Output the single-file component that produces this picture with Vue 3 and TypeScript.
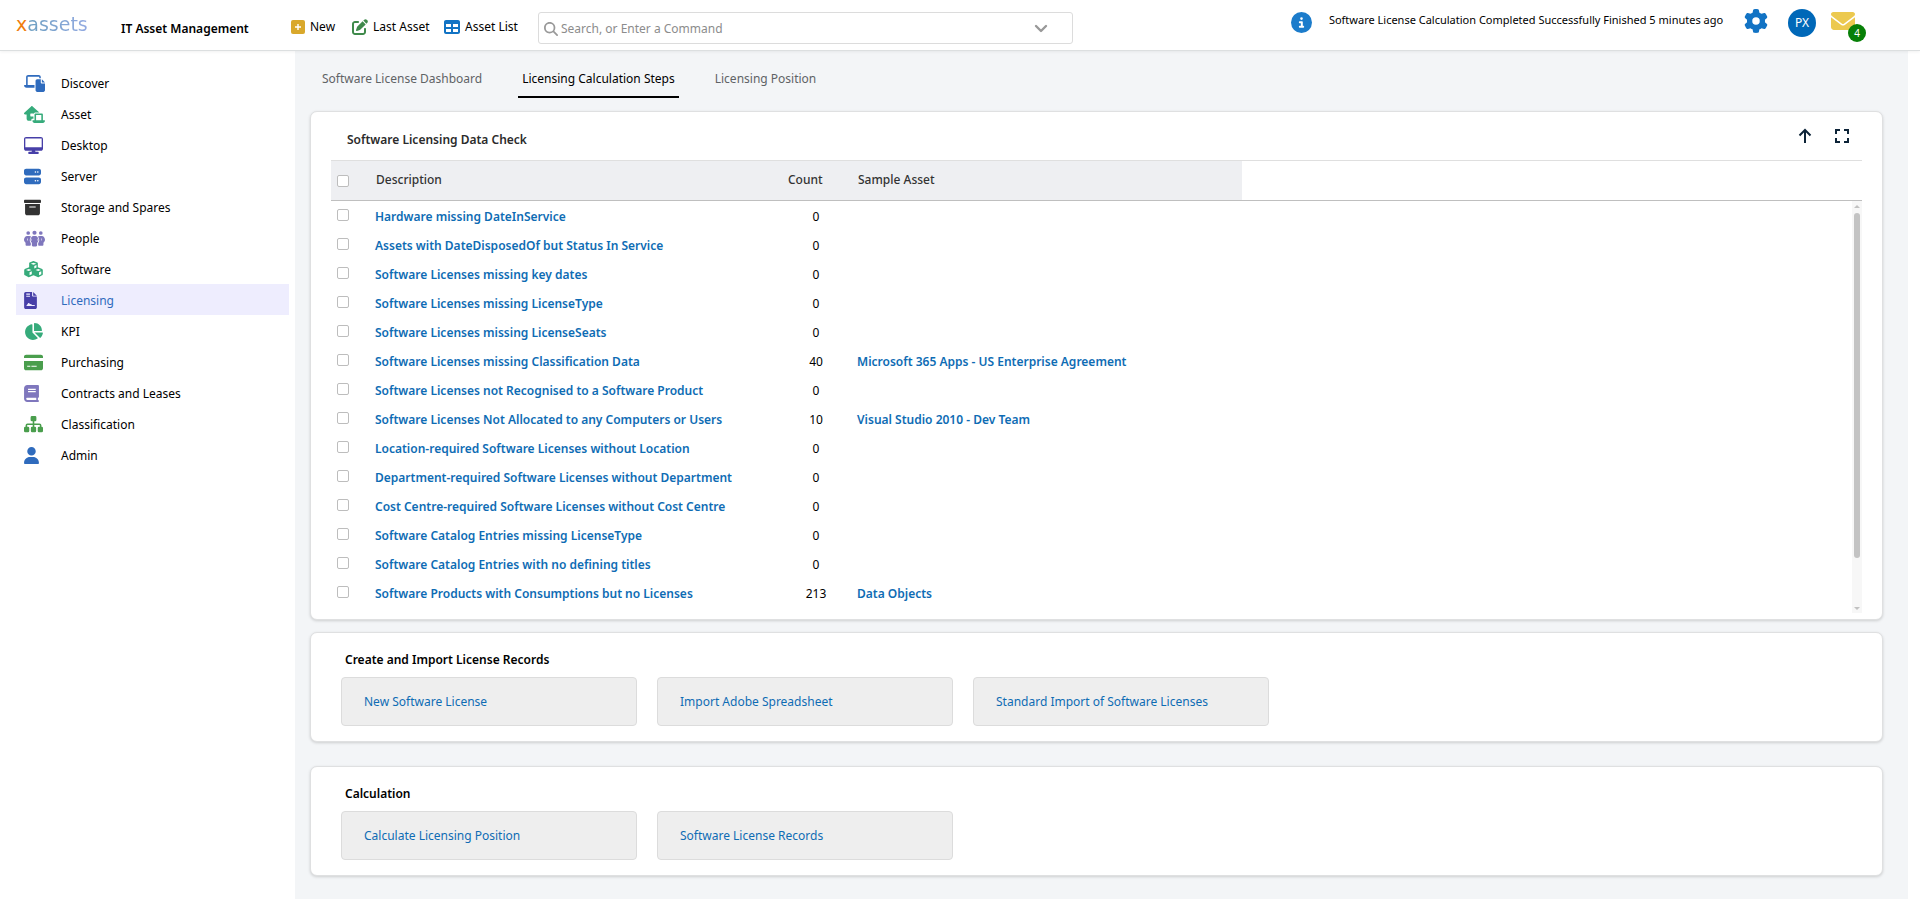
<script setup lang="ts">
import { ref } from 'vue'

interface Icon {
  box: string
  width: number
  height: number
  color: string
  d: string
}

interface NavItem {
  label: string
  icon: Icon
}

interface CheckRow {
  description: string
  count: number
  sample?: string
}

interface ActionGroup {
  title: string
  actions: string[]
}

const navItems: NavItem[] = [
  {
    label: 'Discover',
    icon: {
      box: '0 0 640 512', width: 21, height: 17, color: '#2f6bbd',
      d: 'M128 0C93 0 64 29 64 64V304H19C8 304 0 310 0 320C0 356 35 384 77 384H320V304H112V48H464V96H512V64C512 29 483 0 448 0zM512 128H400C374 128 352 150 352 176V464C352 490 374 512 400 512H592C618 512 640 490 640 464V256H544C526 256 512 242 512 224zM544 128V224H640z',
    },
  },
  {
    label: 'Asset',
    icon: {
      box: '0 0 640 512', width: 21, height: 17, color: '#36ab7b',
      d: 'M218 9C230 -3 250 -3 262 9L469 192H352C326 192 304 210 296 234C291 227 283 224 272 224H208C199 224 192 231 192 240V304C192 313 199 320 208 320H272C280 320 286 316 288 308V384H256C238 384 224 398 224 416V448H144C109 448 80 419 80 384V256H32C19 256 7 248 2 235C-3 223 1 209 10 200zM352 224H544C562 224 576 238 576 256V432H624C633 432 640 439 640 448C640 483 611 512 576 512H320C285 512 256 483 256 448C256 439 263 432 272 432H320V256C320 238 334 224 352 224zM368 272V432H528V272z',
    },
  },
  {
    label: 'Desktop',
    icon: {
      box: '0 0 576 512', width: 19, height: 17, color: '#473fa8',
      d: 'M64 0C28.7 0 0 28.7 0 64V352c0 35.3 28.7 64 64 64H240l-10.7 32H160c-17.7 0-32 14.3-32 32s14.3 32 32 32H416c17.7 0 32-14.3 32-32s-14.3-32-32-32H346.7L336 416H512c35.3 0 64-28.7 64-64V64c0-35.3-28.7-64-64-64H64zM536 40V310H40V40H536z',
    },
  },
  {
    label: 'Server',
    icon: {
      box: '0 0 512 512', width: 17, height: 17, color: '#2f6bbd',
      d: 'M64 20C28.7 20 0 48.7 0 84v76c0 35.3 28.7 64 64 64H448c35.3 0 64-28.7 64-64V84c0-35.3-28.7-64-64-64H64zm280 78a24 24 0 1 1 0 48 24 24 0 1 1 0-48zm48 24a24 24 0 1 1 48 0 24 24 0 1 1 -48 0zM64 284c-35.3 0-64 28.7-64 64v76c0 35.3 28.7 64 64 64H448c35.3 0 64-28.7 64-64V348c0-35.3-28.7-64-64-64H64zm280 78a24 24 0 1 1 0 48 24 24 0 1 1 0-48zm48 24a24 24 0 1 1 48 0 24 24 0 1 1 -48 0z',
    },
  },
  {
    label: 'Storage and Spares',
    icon: {
      box: '0 0 512 512', width: 17, height: 17, color: '#333333',
      d: 'M32 20H480c17.7 0 32 14.3 32 32V88c0 17.7-14.3 32-32 32H32C14.3 120 0 105.7 0 88V52C0 34.300 14.300 20 32 20zM32 152H480V428c0 35.300-28.700 64-64 64H96c-35.300 0-64-28.700-64-64V152zM160 224V256H352V224z',
    },
  },
  {
    label: 'People',
    icon: {
      box: '0 0 640 512', width: 21, height: 17, color: '#7f77bd',
      d: 'M72 88a56 56 0 1 1 112 0a56 56 0 1 1 -112 0zM256 80a64 64 0 1 1 128 0a64 64 0 1 1 -128 0zM456 88a56 56 0 1 1 112 0a56 56 0 1 1 -112 0zM96 176H160C182 176 202 183 218 196C190 228 176 266 176 304C176 346 190 380 208 402V448C208 466 194 480 176 480H80C62 480 48 466 48 448V382C18 358 0 330 0 296C0 232 40 176 96 176zM480 176H544C600 176 640 232 640 296C640 330 622 358 592 382V448C592 466 578 480 560 480H464C446 480 432 466 432 448V402C450 380 464 346 464 304C464 266 450 228 422 196C438 183 458 176 480 176zM290 176H350C404 176 440 230 440 296C440 340 424 366 400 386V464C400 482 386 496 368 496H272C254 496 240 482 240 464V386C216 366 200 340 200 296C200 230 236 176 290 176zM240 250C222 282 222 312 240 340zM400 250V340C418 312 418 282 400 250zM110 240C86 268 86 306 110 334zM530 240V334C554 306 554 268 530 240z',
    },
  },
  {
    label: 'Software',
    icon: {
      box: '0 0 576 512', width: 19, height: 17, color: '#36ab7b',
      d: 'M290 0L405 42Q420 48 420 66V190L535 232Q566 244 570 272V400Q570 424 548 434L450 482Q430 492 412 484L288 432L164 484Q146 492 126 482L28 434Q6 424 6 400V272Q10 244 41 232L156 190V66Q156 48 171 42L280 2zM288 48L204 80L288 112L372 80zM312 150V222L378 192V122zM144 240L62 270L144 302L226 270zM168 342V430L236 400V312zM432 240L350 270L432 302L514 270zM456 342V430L524 400V312z',
    },
  },
  {
    label: 'Licensing',
    icon: {
      box: '0 0 384 512', width: 13, height: 17, color: '#473fa8',
      d: 'M48 0H240V104C240 122 254 136 272 136H384V464C384 490 362 512 336 512H48C22 512 0 490 0 464V48C0 22 22 0 48 0zM272 0L384 112H272zM64 48V80H176V48zM64 112V144H176V112zM64 424L120 340C130 324 146 324 156 340L180 372C190 358 204 358 214 370L240 392H320V424z',
    },
  },
  {
    label: 'KPI',
    icon: {
      box: '0 0 576 512', width: 19, height: 17, color: '#36ab7b',
      d: 'M304 240V16.6c0-9 7-16.6 16-16.6C443.7 0 544 100.3 544 224c0 9-7.6 16-16.6 16H304zM32 272C32 150.7 122.1 50.3 239 34.3c9.2-1.3 17 6.1 17 15.4V288L412.5 444.5c6.7 6.7 6.2 17.7-1.5 23.1C371.8 495.6 323.8 512 272 512C139.5 512 32 404.6 32 272zm526.4 16c9.3 0 16.6 7.8 15.4 17c-7.7 55.9-34.6 105.6-73.9 142.3c-6 5.6-15.4 5.2-21.2-.7L320 288H558.4z',
    },
  },
  {
    label: 'Purchasing',
    icon: {
      box: '0 0 576 512', width: 19, height: 17, color: '#4a9e4d',
      d: 'M64 20C28.7 20 0 48.7 0 84v36H576V84c0-35.3-28.7-64-64-64H64zM576 212H0V428c0 35.3 28.7 64 64 64H512c35.3 0 64-28.7 64-64V212zM96 352h96v32H96zM224 352h160v32H224z',
    },
  },
  {
    label: 'Contracts and Leases',
    icon: {
      box: '0 0 448 512', width: 15, height: 17, color: '#7f77bd',
      d: 'M96 0C43 0 0 43 0 96V416c0 53 43 96 96 96H384h32c17.7 0 32-14.3 32-32s-14.3-32-32-32V384c17.7 0 32-14.3 32-32V32c0-17.7-14.3-32-32-32H96zm0 384H368v64H96c-17.7 0-32-14.3-32-32s14.3-32 32-32zM120 112V148H352V112zM120 184V220H352V184z',
    },
  },
  {
    label: 'Classification',
    icon: {
      box: '0 0 576 512', width: 19, height: 17, color: '#4a9e4d',
      d: 'M240 0H336Q376 0 376 40V120Q376 160 336 160H312V224H470Q528 224 528 282V324H536Q576 324 576 364V452Q576 492 536 492H456Q416 492 416 452V364Q416 324 456 324H480V282Q480 272 470 272H312V324H328Q368 324 368 364V452Q368 492 328 492H248Q208 492 208 452V364Q208 324 248 324H264V272H106Q96 272 96 282V324H120Q160 324 160 364V452Q160 492 120 492H40Q0 492 0 452V364Q0 324 40 324H48V282Q48 224 106 224H264V160H240Q200 160 200 120V40Q200 0 240 0z',
    },
  },
  {
    label: 'Admin',
    icon: {
      box: '0 0 448 512', width: 15, height: 17, color: '#2f6bbd',
      d: 'M224 256A128 128 0 1 0 224 0a128 128 0 1 0 0 256zm-45.7 48C79.8 304 0 383.8 0 482.3C0 498.7 13.3 512 29.7 512H418.3c16.4 0 29.7-13.3 29.7-29.7C448 383.8 368.2 304 269.7 304H178.3z',
    },
  },
]

const tabs = ['Software License Dashboard', 'Licensing Calculation Steps', 'Licensing Position']

const rows: CheckRow[] = [
  { description: 'Hardware missing DateInService', count: 0 },
  { description: 'Assets with DateDisposedOf but Status In Service', count: 0 },
  { description: 'Software Licenses missing key dates', count: 0 },
  { description: 'Software Licenses missing LicenseType', count: 0 },
  { description: 'Software Licenses missing LicenseSeats', count: 0 },
  { description: 'Software Licenses missing Classification Data', count: 40, sample: 'Microsoft 365 Apps - US Enterprise Agreement' },
  { description: 'Software Licenses not Recognised to a Software Product', count: 0 },
  { description: 'Software Licenses Not Allocated to any Computers or Users', count: 10, sample: 'Visual Studio 2010 - Dev Team' },
  { description: 'Location-required Software Licenses without Location', count: 0 },
  { description: 'Department-required Software Licenses without Department', count: 0 },
  { description: 'Cost Centre-required Software Licenses without Cost Centre', count: 0 },
  { description: 'Software Catalog Entries missing LicenseType', count: 0 },
  { description: 'Software Catalog Entries with no defining titles', count: 0 },
  { description: 'Software Products with Consumptions but no Licenses', count: 213, sample: 'Data Objects' },
]

const groups: ActionGroup[] = [
  {
    title: 'Create and Import License Records',
    actions: ['New Software License', 'Import Adobe Spreadsheet', 'Standard Import of Software Licenses'],
  },
  {
    title: 'Calculation',
    actions: ['Calculate Licensing Position', 'Software License Records'],
  },
]

const activeNav = ref('Licensing')
const activeTab = ref('Licensing Calculation Steps')
const query = ref('')
const selected = ref<string[]>([])

function toggleAll(event: Event) {
  const checked = (event.target as HTMLInputElement).checked
  selected.value = checked ? rows.map((row) => row.description) : []
}
</script>

<template>
  <div class="page">
    <header class="topbar">
      <a class="logo" href="#"><span class="logo-x">x</span><span class="logo-rest">assets</span></a>
      <h1 class="product">IT Asset Management</h1>

      <nav class="quick" aria-label="Quick actions">
        <a class="quick-new" href="#">
          <svg width="14" height="14" viewBox="0 0 14 14">
            <rect width="14" height="14" rx="2" fill="#d9a82b" />
            <path d="M7 4v6M4 7h6" stroke="#fff" stroke-width="1.400" />
          </svg>
          New
        </a>
        <a class="quick-last" href="#">
          <svg width="16" height="16" viewBox="0 0 512 512" fill="#3f8a4b">
            <path d="M471.6 21.7c-21.9-21.9-57.3-21.9-79.2 0L362.3 51.7l97.9 97.9 30.1-30.1c21.9-21.9 21.9-57.3 0-79.2L471.6 21.7zm-299.2 220c-6.1 6.1-10.8 13.6-13.5 21.9l-29.6 88.8c-2.9 8.6-.6 18.1 5.8 24.6s15.9 8.7 24.6 5.8l88.8-29.6c8.2-2.7 15.7-7.4 21.9-13.5L437.7 172.3 339.7 74.3 172.4 241.7zM96 64C43 64 0 107 0 160V416c0 53 43 96 96 96H352c53 0 96-43 96-96V320c0-17.7-14.3-32-32-32s-32 14.3-32 32v96c0 17.7-14.3 32-32 32H96c-17.7 0-32-14.3-32-32V160c0-17.7 14.3-32 32-32h96c17.7 0 32-14.3 32-32s-14.3-32-32-32H96z" />
          </svg>
          Last Asset
        </a>
        <a class="quick-list" href="#">
          <svg width="16" height="16" viewBox="0 0 512 512" fill="#1273c4">
            <path fill-rule="evenodd" d="M64 256V160H224v96H64zm0 64H224v96H64V320zm224 96V320H448v96H288zM448 256H288V160H448v96zM64 32C28.7 32 0 60.7 0 96V416c0 35.3 28.7 64 64 64H448c35.3 0 64-28.7 64-64V96c0-35.3-28.7-64-64-64H64z" />
          </svg>
          Asset List
        </a>
      </nav>

      <form class="search" role="search" @submit.prevent>
        <svg width="14" height="14" viewBox="0 0 512 512" fill="#999">
          <path d="M416 208c0 45.9-14.9 88.3-40 122.7L502.6 457.4c12.5 12.5 12.5 32.8 0 45.3s-32.8 12.5-45.3 0L330.7 376c-34.4 25.2-76.8 40-122.7 40C93.1 416 0 322.9 0 208S93.1 0 208 0S416 93.1 416 208zM208 352a144 144 0 1 0 0-288 144 144 0 1 0 0 288z" />
        </svg>
        <input v-model="query" type="text" aria-label="Search" placeholder="Search, or Enter a Command" />
        <button type="button" aria-label="Show commands">
          <svg width="14" height="10" viewBox="0 0 14 10">
            <path d="M2 2l5 5 5-5" fill="none" stroke="#999" stroke-width="2.400" stroke-linecap="round" stroke-linejoin="round" />
          </svg>
        </button>
      </form>

      <div class="status">
        <svg width="21" height="21" viewBox="0 0 512 512" fill="#1c7ccb">
          <path d="M256 512A256 256 0 1 0 256 0a256 256 0 1 0 0 512zM216 336h24V272H216c-13.3 0-24-10.7-24-24s10.7-24 24-24h48c13.3 0 24 10.7 24 24v88h8c13.3 0 24 10.7 24 24s-10.7 24-24 24H216c-13.3 0-24-10.7-24-24s10.7-24 24-24zm40-208a32 32 0 1 1 0 64 32 32 0 1 1 0-64z" />
        </svg>
        <span class="status-text">Software License Calculation Completed Successfully Finished 5 minutes ago</span>
        <button class="gear" type="button" aria-label="Settings">
          <svg width="24" height="24" viewBox="0 0 512 512" fill="#1273c4">
            <path d="M495.9 166.6c3.2 8.700 .5 18.400-6.400 24.600l-43.300 39.400c1.100 8.300 1.700 16.800 1.700 25.400s-.6 17.100-1.700 25.400l43.300 39.400c6.900 6.200 9.600 15.900 6.400 24.600c-4.400 11.900-9.700 23.300-15.800 34.300l-4.700 8.100c-6.600 11-14 21.400-22.100 31.200c-5.900 7.200-15.700 9.600-24.500 6.800l-55.700-17.700c-13.400 10.300-28.200 18.900-44 25.400l-12.500 57.100c-2 9.100-9 16.300-18.200 17.800c-13.800 2.300-28 3.500-42.500 3.500s-28.700-1.200-42.500-3.500c-9.200-1.500-16.200-8.700-18.200-17.800l-12.500-57.100c-15.800-6.500-30.600-15.100-44-25.400L83.100 425.900c-8.800 2.800-18.600 .3-24.500-6.800c-8.100-9.800-15.500-20.200-22.100-31.200l-4.700-8.100c-6.100-11-11.400-22.400-15.800-34.300c-3.200-8.700-.5-18.400 6.400-24.600l43.300-39.400C64.600 273.100 64 264.600 64 256s.6-17.100 1.700-25.400L22.400 191.200c-6.900-6.200-9.600-15.900-6.400-24.600c4.400-11.900 9.700-23.300 15.800-34.300l4.700-8.100c6.600-11 14-21.400 22.100-31.200c5.900-7.200 15.700-9.600 24.500-6.800l55.700 17.700c13.400-10.300 28.200-18.900 44-25.400l12.500-57.100c2-9.100 9-16.300 18.200-17.800C227.300 1.200 241.500 0 256 0s28.700 1.200 42.500 3.500c9.200 1.500 16.200 8.700 18.200 17.800l12.500 57.100c15.800 6.500 30.600 15.100 44 25.400l55.700-17.700c8.800-2.800 18.600-.3 24.500 6.800c8.100 9.800 15.500 20.200 22.100 31.200l4.700 8.100c6.100 11 11.400 22.400 15.800 34.300zM256 336a80 80 0 1 0 0-160 80 80 0 1 0 0 160z" />
          </svg>
        </button>
        <button class="avatar" type="button">PX</button>
        <button class="mail" type="button" aria-label="Messages, 4 unread">
          <svg width="24" height="18" viewBox="0 64 512 384" preserveAspectRatio="none" fill="#ecc94f">
            <path d="M48 64C21.5 64 0 85.5 0 112c0 15.1 7.1 29.3 19.2 38.4L236.8 313.6c11.4 8.5 27 8.5 38.4 0L492.8 150.4c12.1-9.1 19.2-23.3 19.2-38.4c0-26.5-21.5-48-48-48H48zM0 176V384c0 35.3 28.7 64 64 64H448c35.3 0 64-28.7 64-64V176L294.4 339.2c-22.8 17.1-54 17.1-76.8 0L0 176z" />
          </svg>
          <span class="badge">4</span>
        </button>
      </div>
    </header>

    <div class="body">
      <nav class="sidebar" aria-label="Sections">
        <a
          v-for="item in navItems"
          :key="item.label"
          href="#"
          class="nav-item"
          :class="{ active: item.label === activeNav }"
          @click.prevent="activeNav = item.label"
        >
          <span class="nav-icon">
            <svg :width="item.icon.width" :height="item.icon.height" :viewBox="item.icon.box" :fill="item.icon.color">
              <path fill-rule="evenodd" :d="item.icon.d" />
            </svg>
          </span>
          <span>{{ item.label }}</span>
        </a>
      </nav>

      <main class="content">
        <nav class="tabs" aria-label="Views">
          <a
            v-for="tab in tabs"
            :key="tab"
            href="#"
            class="tab"
            :class="{ active: tab === activeTab }"
            @click.prevent="activeTab = tab"
          >{{ tab }}</a>
        </nav>

        <section class="card check-card">
          <div class="card-head">
            <h2>Software Licensing Data Check</h2>
            <div class="tools">
              <button type="button" aria-label="Move up">
                <svg width="14" height="16" viewBox="0 0 14 16">
                  <path d="M7 15V2M1.500 7.500L7 2l5.500 5.500" fill="none" stroke="#0d2438" stroke-width="2" />
                </svg>
              </button>
              <button type="button" aria-label="Full screen">
                <svg width="16" height="16" viewBox="0 0 16 16">
                  <path d="M2 6V2h4M10 2h4v4M14 10v4h-4M6 14H2v-4" fill="none" stroke="#0d2438" stroke-width="2" />
                </svg>
              </button>
            </div>
          </div>

          <div class="grid">
            <table>
              <colgroup>
                <col class="col-check" />
                <col class="col-desc" />
                <col class="col-count" />
                <col class="col-sample" />
                <col />
              </colgroup>
              <thead>
                <tr>
                  <th><input type="checkbox" aria-label="Select all" @change="toggleAll" /></th>
                  <th>Description</th>
                  <th class="count-head">Count</th>
                  <th>Sample Asset</th>
                  <td class="filler"></td>
                </tr>
              </thead>
              <tbody>
                <tr v-for="row in rows" :key="row.description">
                  <td><input v-model="selected" type="checkbox" :value="row.description" :aria-label="row.description" /></td>
                  <td><a href="#">{{ row.description }}</a></td>
                  <td class="count">{{ row.count }}</td>
                  <td><a v-if="row.sample" href="#">{{ row.sample }}</a></td>
                  <td></td>
                </tr>
              </tbody>
            </table>
            <div class="scrollbar" aria-hidden="true">
              <svg width="6" height="12" viewBox="0 0 6 12"><path d="M0 7l3-3 3 3z" fill="#c1c1c1" /></svg>
              <div class="track"><div class="thumb"></div></div>
              <svg width="6" height="12" viewBox="0 0 6 12"><path d="M0 6l3 3 3-3z" fill="#c1c1c1" /></svg>
            </div>
          </div>
        </section>

        <section v-for="group in groups" :key="group.title" class="card group">
          <h2>{{ group.title }}</h2>
          <div class="tiles">
            <a v-for="action in group.actions" :key="action" href="#" class="tile">{{ action }}</a>
          </div>
        </section>
      </main>
    </div>
  </div>
</template>

<style>
body {
  margin: 0;
  background: #fff;
}
</style>

<style scoped>
.page {
  box-sizing: border-box;
  min-height: 100vh;
  display: flex;
  flex-direction: column;
  padding-bottom: 13px;
  background: #fff;
  color: #000;
  font-family: "Segoe UI", "Noto Sans", "Open Sans", sans-serif;
  font-size: 12px;
  line-height: 18px;
}

.page * {
  box-sizing: border-box;
}

a {
  color: inherit;
  text-decoration: none;
}

button {
  padding: 0;
  border: 0;
  background: none;
  color: inherit;
  font: inherit;
  cursor: pointer;
}

svg {
  display: block;
  flex: none;
}

h1,
h2 {
  margin: 0;
  font-size: 12px;
  font-weight: 600;
}

.topbar {
  position: relative;
  display: flex;
  align-items: flex-start;
  height: 51px;
  padding-left: 16px;
  padding-right: 54px;
  border-bottom: 1px solid #dcdfe0;
  box-shadow: 0 1px 3px rgba(0, 0, 0, 0.06);
}

.logo {
  width: 105px;
  padding-top: 12px;
  font-family: "DejaVu Sans", Verdana, sans-serif;
  font-size: 19px;
  line-height: 24px;
}

.logo-x {
  color: #ef7d0c;
}

.logo-rest {
  background: linear-gradient(90deg, #6d9fc0, #93aae2);
  background-clip: text;
  color: transparent;
}

.product {
  width: 170px;
  padding-top: 20px;
  white-space: nowrap;
}

.quick {
  display: flex;
  padding-top: 18px;
  white-space: nowrap;
}

.quick a {
  display: flex;
  align-items: center;
  gap: 5px;
}

.quick-new {
  width: 61px;
}

.quick-last {
  width: 92px;
}

.quick-list {
  width: 94px;
}

.search {
  display: flex;
  align-items: center;
  flex: 0 1 535px;
  height: 32px;
  margin-top: 12px;
  padding: 2px 24px 0 5px;
  border: 1px solid #dcdcdc;
  border-radius: 3px;
}

.search input {
  flex: 1;
  min-width: 0;
  padding: 0 3px;
  border: 0;
  outline: 0;
  background: none;
  color: #333;
  font: inherit;
}

.search input::placeholder {
  color: #8c8c8c;
  opacity: 1;
}

.status {
  display: flex;
  align-items: flex-start;
  margin-left: auto;
  padding-top: 9px;
  white-space: nowrap;
}

.status > svg {
  margin-top: 3px;
}

.status-text {
  min-width: 404px;
  margin: 2px 16px 0 12px;
  font-size: 11px;
  text-align: center;
}

.avatar {
  width: 28px;
  height: 28px;
  margin: 0 15px 0 20px;
  border-radius: 50%;
  background: #0068b8;
  color: #fff;
}

.mail {
  position: relative;
  width: 35px;
  height: 33px;
  padding-top: 3px;
  display: flex;
  align-items: flex-start;
}

.badge {
  position: absolute;
  right: 0;
  bottom: 0;
  width: 18px;
  height: 18px;
  border-radius: 50%;
  background: #078007;
  color: #fff;
  font-size: 10px;
  text-align: center;
}

.body {
  display: flex;
  flex: 1;
  padding-right: 12px;
}

.sidebar {
  flex: none;
  width: 295px;
  padding: 16px 6px 0 16px;
}

.nav-item {
  display: flex;
  align-items: center;
  height: 31px;
  padding: 2px 0 0 8px;
}

.nav-item.active {
  background: #eeedfe;
  color: #2f6bbd;
}

.nav-icon {
  width: 37px;
}

.content {
  flex: 1;
  min-width: 0;
  padding: 12px 25px 23px 15px;
  background: #f3f5f7;
}

.tabs {
  display: flex;
  gap: 32px;
  padding-left: 8px;
  margin-bottom: 13px;
}

.tab {
  height: 35px;
  padding: 7px 4px 0;
  border-bottom: 2px solid transparent;
  color: #5f6366;
}

.tab.active {
  border-color: #000;
  color: #000;
}

.card {
  border: 1px solid #dfe0e1;
  border-radius: 7px;
  background: #fff;
  box-shadow: 0 1px 3px rgba(0, 0, 0, 0.16);
}

.check-card {
  padding: 0 20px 6px;
}

.card-head {
  display: flex;
  align-items: flex-start;
  justify-content: space-between;
  height: 48px;
  padding: 19px 12px 0 16px;
}

.card-head h2 {
  color: #2b2b2b;
}

.tools {
  display: flex;
  gap: 22px;
  margin-top: -3px;
}

.grid {
  position: relative;
  min-height: 453px;
}

table {
  width: 100%;
  table-layout: fixed;
  border-spacing: 0;
}

.col-check {
  width: 40px;
}

.col-desc {
  width: 408px;
}

.col-count {
  width: 74px;
}

.col-sample {
  width: 389px;
}

thead th,
thead td {
  height: 41px;
  padding: 0 5px 1px;
  border-top: 1px solid #dfdfdf;
  border-bottom: 1px solid #bfbfbf;
  background: #eeeff2;
  color: #333;
  font-weight: 500;
  text-align: left;
}

thead .filler {
  background: #fff;
}

thead .count-head {
  padding-left: 9px;
}

tbody td {
  height: 29px;
  padding: 2px 4px 0;
  white-space: nowrap;
}

tbody a {
  color: #0e6cb4;
  font-weight: 600;
}

tbody .count {
  text-align: center;
}

input[type="checkbox"] {
  appearance: none;
  display: block;
  width: 12px;
  height: 12px;
  margin: 0 0 0 2px;
  border: 1px solid #bdbdbd;
  border-radius: 2px;
  background: #fff;
}

thead input[type="checkbox"] {
  margin: 1px 0 0 1px;
}

tbody input[type="checkbox"] {
  margin-bottom: 4px;
}

input[type="checkbox"]:checked {
  background: #1470b8;
}

.scrollbar {
  position: absolute;
  top: 41px;
  right: 0;
  bottom: 0;
  display: flex;
  flex-direction: column;
  align-items: center;
  width: 10px;
  background: #f7f7f7;
}

.track {
  flex: 1;
}

.thumb {
  width: 6px;
  height: 89%;
  border-radius: 3px;
  background: #c3c3c3;
}

.group {
  margin-top: 12px;
  padding: 18px 30px 15px;
}

.group + .group {
  margin-top: 24px;
}

.group h2 {
  margin: 0 0 8px 4px;
}

.tiles {
  display: flex;
  gap: 20px;
}

.tile {
  display: flex;
  align-items: center;
  width: 296px;
  height: 49px;
  padding: 1px 0 0 22px;
  border: 1px solid #dcdcdc;
  border-radius: 4px;
  background: #eee;
  color: #0e6cb4;
}
</style>
